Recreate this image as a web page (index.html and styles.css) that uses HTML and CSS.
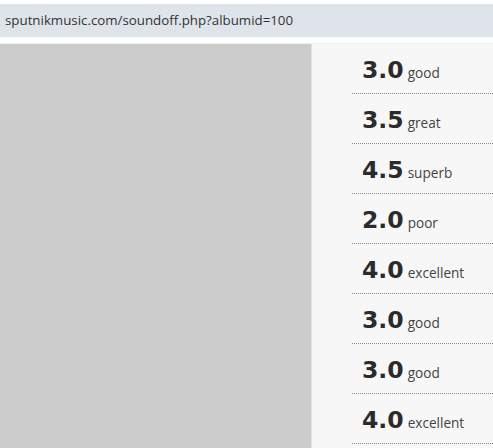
FILE: index.html
```html
<!DOCTYPE html>
<html>
<head>
<meta charset="utf-8">
<link rel="stylesheet" href="styles.css">
</head>
<body>
<div class="urlbar">sputnikmusic.com/soundoff.php?albumid=100</div>
<div class="main">
  <div class="left"></div>
  <div class="right">
    <div class="row"><span class="num">3.0</span><span class="lbl">good</span></div>
    <div class="row"><span class="num">3.5</span><span class="lbl">great</span></div>
    <div class="row"><span class="num">4.5</span><span class="lbl">superb</span></div>
    <div class="row"><span class="num">2.0</span><span class="lbl">poor</span></div>
    <div class="row"><span class="num">4.0</span><span class="lbl">excellent</span></div>
    <div class="row"><span class="num">3.0</span><span class="lbl">good</span></div>
    <div class="row"><span class="num">3.0</span><span class="lbl">good</span></div>
    <div class="row"><span class="num">4.0</span><span class="lbl">excellent</span></div>
  </div>
</div>
</body>
</html>
```
FILE: styles.css
```css
html, body {
  margin: 0;
  padding: 0;
  background: #ffffff;
  overflow: hidden;
}
.urlbar {
  margin-top: 4px;
  height: 33px;
  background: #dfe4eb;
  font-family: "Open Sans", "Noto Sans", sans-serif;
  font-size: 13.3px;
  color: #333;
  line-height: 33px;
  padding-left: 5px;
  box-sizing: border-box;
}
.main {
  margin-top: 6px;
  display: flex;
  height: 420px;
  border-top: 1px solid #eeeeee;
}
.left {
  width: 311px;
  background: #cccccc;
}
.right {
  flex: 1;
  background: #f7f7f7;
  border-left: 1px solid #e2e2e2;
  padding-left: 40px;
}
.row {
  height: 49px;
  border-bottom: 1px dotted #8a8a8a;
  display: flex;
  align-items: baseline;
  padding-left: 10px;
  box-sizing: content-box;
}
.num {
  font-family: "DejaVu Sans", sans-serif;
  font-weight: bold;
  font-size: 23.5px;
  color: #2b2b2b;
  line-height: 1;
  padding-top: 15px;
  margin-right: 4px;
}
.lbl {
  font-family: "Open Sans", "Noto Sans", sans-serif;
  font-size: 13.6px;
  color: #444;
}
```
